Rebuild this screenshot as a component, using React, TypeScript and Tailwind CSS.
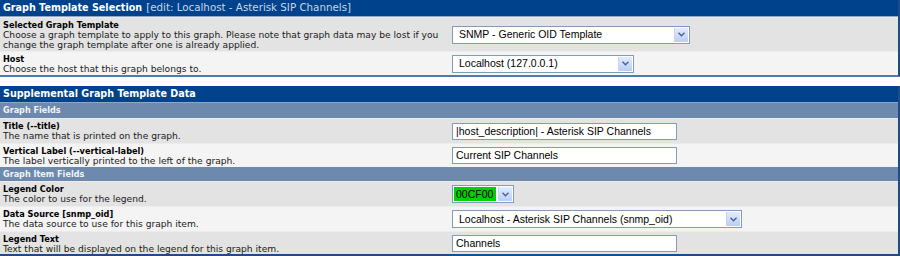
import React from 'react'

type RowProps = {
  label: string
  desc: React.ReactNode
  shade: 'dark' | 'light'
  height: string
  children: React.ReactNode
}

function Row({ label, desc, shade, height, children }: RowProps) {
  return (
    <div
      className={`flex border-t border-[#ececec] ${height} ${
        shade === 'dark' ? 'bg-[#e3e3e3]' : 'bg-[#f4f4f4]'
      }`}
    >
      <div className="w-[449px] shrink-0 pl-[3px] pt-[2px] leading-[10px] whitespace-nowrap">
        <div className="font-bold text-[8.2px] text-black">{label}</div>
        <div className="text-[9.15px] text-[#1a1a1a]">{desc}</div>
      </div>
      <div className="flex items-center pl-[3px]">{children}</div>
    </div>
  )
}

function Chevron() {
  return (
    <div className="flex h-full w-[14px] items-center justify-center border-l border-[#c5d4f0] bg-gradient-to-b from-[#e3ecfd] to-[#b9cdf7]">
      <svg width="7" height="5" viewBox="0 0 7 5">
        <path d="M0.5 0.8 L3.5 3.8 L6.5 0.8" fill="none" stroke="#4d6185" strokeWidth="1.4" />
      </svg>
    </div>
  )
}

function Select({ value, width }: { value: string; width: string }) {
  return (
    <div className={`flex h-[18px] ${width} items-center border border-[#7f9db9] bg-white p-px`}>
      <div className="flex-1 truncate pl-[5px] font-['Liberation_Sans',Arial,sans-serif] text-[10.5px] leading-[13px] text-black">
        {value}
      </div>
      <Chevron />
    </div>
  )
}

function TextInput({ value }: { value: string }) {
  return (
    <div className="flex h-[17px] w-[225px] items-center border border-[#7f9db9] bg-white pl-[3px] font-['Liberation_Sans',Arial,sans-serif] text-[10.5px] leading-[13px] text-black">
      {value}
    </div>
  )
}

function Header({ title, sub }: { title: string; sub?: string }) {
  return (
    <div className="flex h-[17px] items-center border-b border-[#8ea8ca] bg-[#00438c] pl-[3px] whitespace-nowrap text-white">
      <span className="font-bold text-[9.6px]">{title}</span>
      {sub && <span className="ml-[4px] text-[10.3px] text-[#c9d6e8]">{sub}</span>}
    </div>
  )
}

function SubHeader({ title, height }: { title: string; height: string }) {
  return (
    <div className={`flex ${height} items-center bg-[#6d89ad] pl-[3px] font-bold text-[8.1px] text-[#f0f4f8]`}>
      {title}
    </div>
  )
}

export default function App() {
  return (
    <div className="h-[256px] w-[900px] overflow-hidden bg-white font-['DejaVu_Sans',Verdana,sans-serif]">
      <div className="border-r-2 border-b-2 border-r-[#1d4d85] border-b-[#4f7bb0]">
        <Header title="Graph Template Selection" sub="[edit: Localhost - Asterisk SIP Channels]" />
        <Row
          label="Selected Graph Template"
          shade="dark"
          height="h-[34px]"
          desc={
            <>
              Choose a graph template to apply to this graph. Please note that graph data may be lost if you
              <br />
              change the graph template after one is already applied.
            </>
          }
        >
          <Select value="SNMP - Generic OID Template" width="w-[238px]" />
        </Row>
        <Row label="Host" shade="light" height="h-[24px]" desc="Choose the host that this graph belongs to.">
          <Select value="Localhost (127.0.0.1)" width="w-[182px]" />
        </Row>
      </div>

      <div className="mt-[9px] border-r-2 border-b-2 border-[#1d4d85]">
        <Header title="Supplemental Graph Template Data" />
        <SubHeader title="Graph Fields" height="h-[15px]" />
        <Row label="Title (--title)" shade="dark" height="h-[25px]" desc="The name that is printed on the graph.">
          <TextInput value="|host_description| - Asterisk SIP Channels" />
        </Row>
        <Row
          label="Vertical Label (--vertical-label)"
          shade="light"
          height="h-[24px]"
          desc="The label vertically printed to the left of the graph."
        >
          <TextInput value="Current SIP Channels" />
        </Row>
        <SubHeader title="Graph Item Fields" height="h-[14px]" />
        <Row label="Legend Color" shade="dark" height="h-[25px]" desc="The color to use for the legend.">
          <div className="flex h-[18px] w-[62px] items-center border border-[#7f9db9] bg-white p-px">
            <div className="mr-[2px] flex h-full flex-1 items-center bg-[#00cf00] pl-[2px] font-['Liberation_Sans',Arial,sans-serif] text-[10.5px] leading-none text-black">
              00CF00
            </div>
            <Chevron />
          </div>
        </Row>
        <Row
          label="Data Source [snmp_oid]"
          shade="light"
          height="h-[25px]"
          desc="The data source to use for this graph item."
        >
          <Select value="Localhost - Asterisk SIP Channels (snmp_oid)" width="w-[290px]" />
        </Row>
        <Row
          label="Legend Text"
          shade="dark"
          height="h-[23px]"
          desc="Text that will be displayed on the legend for this graph item."
        >
          <TextInput value="Channels" />
        </Row>
      </div>
    </div>
  )
}
